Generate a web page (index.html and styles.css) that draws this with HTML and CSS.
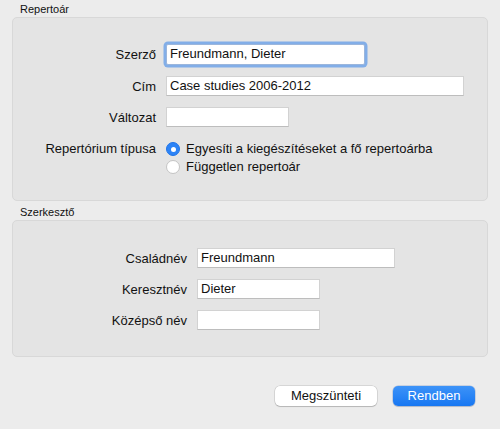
FILE: index.html
```html
<!DOCTYPE html>
<html lang="hu">
<head>
<meta charset="utf-8">
<link rel="stylesheet" href="styles.css">
</head>
<body>
<div class="window">
  <div class="legend">Repertoár</div>
  <div class="box box-rep">
    <div class="form form-rep">
      <div class="label">Szerző</div>
      <div class="field field-focus w-200">Freundmann, Dieter</div>
      <div class="label">Cím</div>
      <div class="field w-298">Case studies 2006-2012</div>
      <div class="label">Változat</div>
      <div class="field w-123"></div>
      <div class="label label-radio">Repertórium típusa</div>
      <div class="radios">
        <div class="radio-row"><span class="radio radio-on"></span>Egyesíti a kiegészítéseket a fő repertoárba</div>
        <div class="radio-row"><span class="radio"></span>Független repertoár</div>
      </div>
    </div>
  </div>
  <div class="legend legend-2">Szerkesztő</div>
  <div class="box box-ed">
    <div class="form form-ed">
      <div class="label">Családnév</div>
      <div class="field w-198">Freundmann</div>
      <div class="label">Keresztnév</div>
      <div class="field w-123">Dieter</div>
      <div class="label">Középső név</div>
      <div class="field w-123"></div>
    </div>
  </div>
  <div class="buttons">
    <div class="btn btn-cancel">Megszünteti</div>
    <div class="btn btn-ok">Rendben</div>
  </div>
</div>
</body>
</html>
```
FILE: styles.css
```css
html, body {
  margin: 0;
  padding: 0;
  background: #ececec;
}
body {
  font-family: "Liberation Sans", Arial, sans-serif;
  font-size: 13px;
  color: #111;
}
.window {
  width: 500px;
  height: 429px;
  padding-top: 3px;
  box-sizing: border-box;
}
.legend {
  font-size: 11px;
  line-height: 13px;
  height: 14px;
  padding-left: 20px;
  color: #111;
}
.legend-2 {
  margin-top: 5px;
}
.box {
  margin: 0 12px;
  background: #e4e4e4;
  border: 1px solid #d8d8d8;
  border-radius: 5px;
}
.box-rep {
  height: 184px;
  box-sizing: border-box;
  padding-top: 26px;
}
.box-ed {
  height: 137px;
  box-sizing: border-box;
  padding-top: 27px;
}
.form {
  display: grid;
  column-gap: 10px;
  row-gap: 11px;
  align-items: center;
}
.form-rep {
  grid-template-columns: 143px auto;
}
.form-ed {
  grid-template-columns: 174px auto;
}
.label {
  text-align: right;
  white-space: nowrap;
}
.label-radio {
  align-self: start;
  line-height: 18px;
  padding-top: 2px;
}
.field {
  height: 20px;
  box-sizing: border-box;
  background: #fff;
  border: 1px solid #d2d2d2;
  border-bottom-color: #bdbdbd;
  padding: 0 3px;
  line-height: 18px;
  white-space: nowrap;
  justify-self: start;
}
.field-focus {
  height: 21px;
  border-color: #9bb6dc;
  border-radius: 2px;
  box-shadow: 0 0 0 2.5px #82aee8;
}
.w-200 { width: 199px; }
.w-298 { width: 298px; }
.w-198 { width: 198px; }
.w-123 { width: 123px; }
.radios {
  display: flex;
  flex-direction: column;
  padding-top: 2px;
}
.radio-row {
  display: flex;
  align-items: center;
  height: 18px;
  line-height: 18px;
  white-space: nowrap;
}
.radio {
  width: 14px;
  height: 14px;
  box-sizing: border-box;
  border-radius: 50%;
  background: #fff;
  border: 1px solid #c4c4c4;
  margin-right: 6px;
  flex: none;
}
.radio-on {
  background: #2c83f6;
  border-color: #1f74e8;
  position: relative;
}
.radio-on::after {
  content: "";
  position: absolute;
  left: 3.5px;
  top: 3.5px;
  width: 5px;
  height: 5px;
  border-radius: 50%;
  background: #fff;
}
.buttons {
  display: flex;
  justify-content: flex-end;
  gap: 16px;
  padding-right: 25px;
  margin-top: 29px;
}
.btn {
  height: 20px;
  line-height: 20px;
  border-radius: 5px;
  text-align: center;
  font-size: 13px;
}
.btn-cancel {
  width: 102px;
  background: #fff;
  color: #111;
  box-shadow: 0 0 0 0.5px rgba(0,0,0,0.18), 0 1px 1px rgba(0,0,0,0.15);
}
.btn-ok {
  width: 82px;
  background: linear-gradient(#3d93f8, #1777f2);
  color: #fff;
  box-shadow: 0 0 0 0.5px rgba(0,60,160,0.3), 0 1px 1px rgba(0,0,0,0.12);
}
```
